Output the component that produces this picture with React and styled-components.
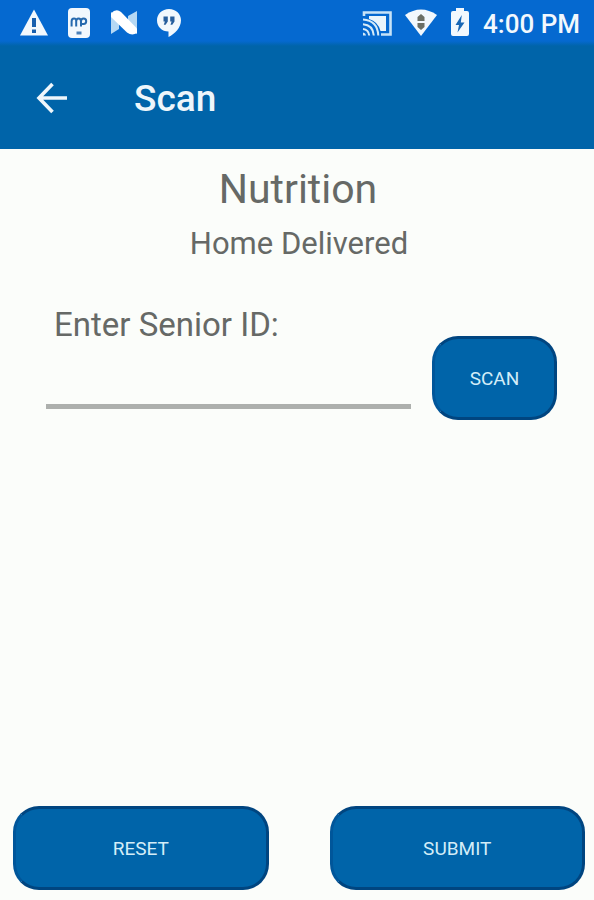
import React from "react";
import styled, { createGlobalStyle } from "styled-components";

const GlobalStyle = createGlobalStyle`
  *, *::before, *::after { box-sizing: border-box; }
  body {
    margin: 0;
    background: #fbfdfa;
    font-family: Roboto, "Liberation Sans", sans-serif;
  }
`;

const Screen = styled.div`
  display: flex;
  flex-direction: column;
  min-height: 100vh;
  color: #666966;
`;

const StatusBar = styled.div`
  display: flex;
  align-items: center;
  justify-content: space-between;
  height: 46px;
  padding: 0 14px 0 18px;
  background: linear-gradient(#0569d0 41px, #0064a9 46px);
  color: #f2f8fd;
`;

const StatusGroup = styled.div`
  display: flex;
  align-items: center;
  gap: ${(p) => p.$gap};
`;

const StatusIcon = styled.svg`
  display: block;
  width: ${(p) => (p.$narrow ? "22px" : "32px")};
  height: 32px;
`;

const Clock = styled.time`
  padding-top: 2px;
  font-size: 26px;
  font-weight: 500;
  line-height: 32px;
`;

const AppBar = styled.header`
  display: flex;
  align-items: center;
  gap: 62px;
  height: 103px;
  padding: 0 32px;
  background: #0064a9;
  color: #eef6fb;
`;

const BackButton = styled.button`
  display: flex;
  width: 40px;
  height: 40px;
  padding: 0;
  border: 0;
  background: none;
  color: inherit;
  cursor: pointer;
`;

const Title = styled.h1`
  margin: 0;
  padding-top: 2px;
  font-size: 37px;
  font-weight: 500;
  line-height: 44px;
`;

const Content = styled.main`
  display: flex;
  flex: 1;
  flex-direction: column;
  padding-top: 16px;
`;

const Heading = styled.h2`
  margin: 0;
  text-align: center;
  font-size: 41px;
  font-weight: 400;
  line-height: 48px;
  padding-left: 2px;
`;

const Subheading = styled.p`
  margin: 13px 0 0;
  padding-left: 4px;
  text-align: center;
  font-size: 31px;
  line-height: 36px;
`;

const EntryRow = styled.div`
  display: flex;
  align-items: flex-start;
  gap: 21px;
  margin-top: 43px;
  padding: 0 37px 0 46px;
`;

const Field = styled.div`
  display: flex;
  flex: 1;
  min-width: 0;
  flex-direction: column;
`;

const Label = styled.label`
  padding-left: 8px;
  font-size: 33px;
  line-height: 40px;
`;

const TextInput = styled.input`
  width: 100%;
  height: 64px;
  padding: 8px;
  border: 0;
  border-bottom: 5px solid #adb0ad;
  border-radius: 0;
  background: none;
  color: inherit;
  font: inherit;
  font-size: 31px;
  outline: none;
`;

const ActionButton = styled.button`
  flex: ${(p) => (p.$compact ? "0 0 125px" : "1")};
  height: 84px;
  margin-top: ${(p) => (p.$compact ? "31px" : "0")};
  padding: 2px 0 0;
  border: 3px solid #004580;
  border-left-color: #00569a;
  border-radius: 26px;
  background: #0064a9;
  color: #d3edf8;
  font-family: inherit;
  font-size: 19px;
  line-height: 24px;
  cursor: pointer;
`;

const Actions = styled.footer`
  display: flex;
  gap: 61px;
  margin-top: auto;
  padding: 0 9px 10px 13px;
`;

function WarningIcon() {
  return (
    <StatusIcon viewBox="0 0 32 32" aria-hidden="true">
      <path d="M16 2.5 30 28.5H2Z" fill="currentColor" />
      <path d="M14 11h4v9h-4zM14 22.4h4v3.6h-4z" fill="#175fae" />
    </StatusIcon>
  );
}

function DeviceIcon() {
  return (
    <StatusIcon viewBox="0 0 32 32" aria-hidden="true">
      <rect x="5" y="1" width="22" height="30" rx="4" fill="currentColor" />
      <path
        d="M8.6 19.5V14.5Q8.6 11.5 11 11.5T13.2 14.5V19.5M13.2 14.5Q13.2 11.5 15.6 11.5T18 14.5V19.5M18 14.5Q18 11.5 20.6 11.5T23.2 14.2 20.6 17H18"
        fill="none"
        stroke="#276aae"
        strokeWidth="2"
      />
      <path d="M13.5 24.5h5v3h-5z" fill="#4a80b8" />
    </StatusIcon>
  );
}

function NougatIcon() {
  return (
    <StatusIcon viewBox="0 0 32 32" aria-hidden="true">
      <path d="M3 5 11 10V22L3 27ZM29 4V27L20 22V9Z" fill="#b5d8f4" />
      <path d="M3 6.5Q8 1 13 5L29 21.5V26Q24 29 19 25.5L3 10Z" fill="#fff" />
    </StatusIcon>
  );
}

function HangoutsIcon() {
  return (
    <StatusIcon viewBox="0 0 32 32" aria-hidden="true">
      <path
        d="M16 2C9 2 4 7 4 13.3 4 20 9 24.5 15.5 24.5V30C22 27 28 20.5 28 13.3 28 7 23 2 16 2Z"
        fill="currentColor"
      />
      <path
        d="M10.5 9.5h4.3v5l-2.2 3.3h-1.8l1.1-3.3h-1.4zM17.2 9.5h4.3v5l-2.2 3.3h-1.8l1.1-3.3h-1.4z"
        fill="#285f9d"
      />
    </StatusIcon>
  );
}

function CastIcon() {
  return (
    <StatusIcon viewBox="0 0 32 32" aria-hidden="true">
      <path
        d="M3 9V5.5H29.5V27.5H20"
        fill="none"
        stroke="#c7e3f7"
        strokeWidth="2.6"
      />
      <path d="M8 9H25V24H19.5Q17 14.5 8 12Z" fill="#eaf5fb" />
      <path
        d="M2 12.5Q16.5 13.5 17.3 28.5M2 17.3Q12 18 12.8 28.5M2 22Q7.5 22.5 8.2 28.5"
        fill="none"
        stroke="#d5ebf8"
        strokeWidth="2"
      />
      <path d="M2 25.5Q4.8 26 5 28.5H2Z" fill="#d5ebf8" />
    </StatusIcon>
  );
}

function WifiIcon() {
  return (
    <StatusIcon viewBox="0 0 32 32" aria-hidden="true">
      <path d="M0 8Q16 -3 32 8L16 29Z" fill="currentColor" />
      <path
        d="M16 7 19.5 10V14H12.5V10ZM12.5 16h7v4L16 23 12.5 20Z"
        fill="#6b6f66"
      />
    </StatusIcon>
  );
}

function BatteryIcon() {
  return (
    <StatusIcon $narrow viewBox="5 0 22 32" aria-hidden="true">
      <path
        d="M12 1h8v3h3q2 0 2 2v21q0 2-2 2H9q-2 0-2-2V6q0-2 2-2h3Z"
        fill="currentColor"
      />
      <path d="M17.8 8 11.5 18H15L13.5 25.5 20.5 15.5H16.8Z" fill="#1766b5" />
    </StatusIcon>
  );
}

function BackArrow() {
  return (
    <svg width="40" height="40" viewBox="0 0 40 40" aria-hidden="true">
      <path
        d="M35 20H7.5M20.5 6 7 20 20.5 34"
        fill="none"
        stroke="currentColor"
        strokeWidth="3.6"
      />
    </svg>
  );
}

export default function App() {
  return (
    <Screen>
      <GlobalStyle />
      <StatusBar>
        <StatusGroup $gap="13px">
          <WarningIcon />
          <DeviceIcon />
          <NougatIcon />
          <HangoutsIcon />
        </StatusGroup>
        <StatusGroup $gap="12px">
          <CastIcon />
          <WifiIcon />
          <BatteryIcon />
          <Clock>4:00 PM</Clock>
        </StatusGroup>
      </StatusBar>
      <AppBar>
        <BackButton type="button" aria-label="Back">
          <BackArrow />
        </BackButton>
        <Title>Scan</Title>
      </AppBar>
      <Content>
        <Heading>Nutrition</Heading>
        <Subheading>Home Delivered</Subheading>
        <EntryRow>
          <Field>
            <Label htmlFor="senior-id">Enter Senior ID:</Label>
            <TextInput id="senior-id" type="text" />
          </Field>
          <ActionButton type="button" $compact>
            SCAN
          </ActionButton>
        </EntryRow>
        <Actions>
          <ActionButton type="reset">RESET</ActionButton>
          <ActionButton type="submit">SUBMIT</ActionButton>
        </Actions>
      </Content>
    </Screen>
  );
}
